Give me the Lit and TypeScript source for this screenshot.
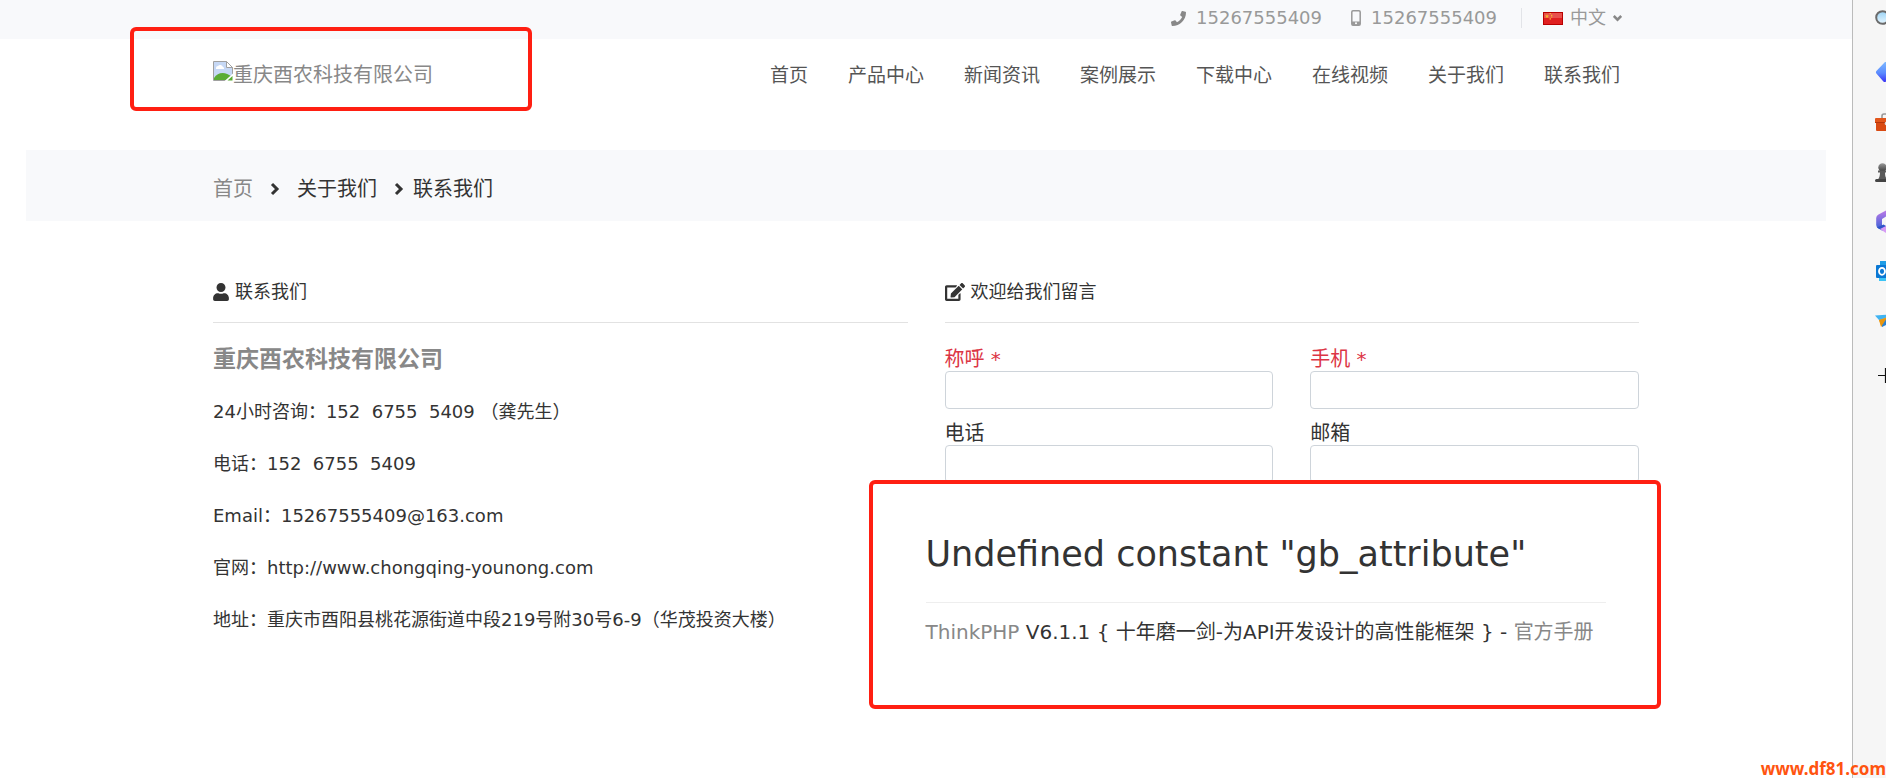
import { LitElement, html, svg, css } from "lit";
import { customElement } from "lit/decorators.js";

const NAV = ["首页", "产品中心", "新闻资讯", "案例展示", "下载中心", "在线视频", "关于我们", "联系我们"];

const CONTACT = [
  "24小时咨询：152\u00a0 6755\u00a0 5409 （龚先生）",
  "电话：152\u00a0 6755\u00a0 5409",
  "Email：15267555409@163.com",
  "官网：http://www.chongqing-younong.com",
  "地址：重庆市酉阳县桃花源街道中段219号附30号6-9（华茂投资大楼）",
];

const FIELDS = [
  { id: "name", label: "称呼", required: true },
  { id: "mobile", label: "手机", required: true },
  { id: "phone", label: "电话", required: false },
  { id: "email", label: "邮箱", required: false },
];

const RAIL = [
  {
    name: "搜索",
    art: svg`<defs><linearGradient id="lens" x2="0" y2="1"><stop stop-color="#9bd3f5"/><stop offset="1" stop-color="#e6f6ff"/></linearGradient></defs>
      <path d="M12 12l7 7" stroke="#666" stroke-width="3" stroke-linecap="round"/>
      <circle cx="7.5" cy="7.5" r="6.3" fill="url(#lens)" stroke="#6b6b6b" stroke-width="2"/>`,
  },
  {
    name: "购物",
    art: svg`<defs><linearGradient id="tag" x2="0" y2="1"><stop stop-color="#7db8ff"/><stop offset=".55" stop-color="#5b8cff"/><stop offset="1" stop-color="#3a35f5"/></linearGradient></defs>
      <path d="M1.6 10.8 10 2h10v10L11 21.4a2 2 0 0 1-2.6 0L1.6 13.8a2.2 2.2 0 0 1 0-3z" fill="url(#tag)"/>`,
  },
  {
    name: "工具",
    art: svg`<path d="M7 8V6a2 2 0 0 1 2-2h6a2 2 0 0 1 2 2v2" fill="none" stroke="#9a9a9a" stroke-width="1.6"/>
      <rect x="1" y="10" width="21" height="11" rx="1" fill="#d94a12"/>
      <rect x="0" y="8" width="23" height="5" rx="1" fill="#e2561b"/>
      <rect x="0" y="12" width="23" height="1" fill="#b5360a"/>
      <circle cx="11.500" cy="13.500" r="1.800" fill="#ddd"/>`,
  },
  {
    name: "游戏",
    art: svg`<defs><linearGradient id="pawn" x2="0" y2="1"><stop stop-color="#999"/><stop offset="1" stop-color="#3c3c3c"/></linearGradient></defs>
      <circle cx="7.500" cy="7.500" r="4.200" fill="url(#pawn)"/>
      <path d="M3 10.500h9v2H10c0 3 .6 5 2 7H3c1.400-2 2-4 2-7H3z" fill="#5b5b5b"/>
      <rect x="0" y="19" width="15" height="3" rx="1.500" fill="#444"/>`,
  },
  {
    name: "Microsoft 365",
    art: svg`<defs><linearGradient id="hexa" x2="0" y2="1"><stop stop-color="#c07ae8"/><stop offset="1" stop-color="#3d62d6"/></linearGradient></defs>
      <path d="M12 0 3.500 4.500A4 4 0 0 0 1.200 8v7a4 4 0 0 0 2.300 3.500L7 19V9l5-3z" fill="url(#hexa)"/>
      <path d="M12 16.500 8.500 14.500 1.800 17.500 7 20.500 12 20z" fill="#2f55c8"/>
      <path d="M5 19l6-3v7z" fill="#d79bf5"/>`,
  },
  {
    name: "Outlook",
    art: svg`<rect x="5" y="1" width="16" height="20" fill="#1f9de6"/>
      <rect x="4" y="17" width="17" height="4" fill="#3cc4f5"/>
      <rect x="1" y="5" width="13" height="13" rx="1" fill="#0a78d4"/>
      <ellipse cx="7" cy="11.300" rx="3" ry="3.500" fill="none" stroke="#fff" stroke-width="1.800"/>`,
  },
  {
    name: "投递",
    art: svg`<path d="M0 5.500 22 4 14 10 4 10z" fill="#3fb3f2"/>
      <path d="M4 10 18 5 7 17z" fill="#f5a11c"/>
      <path d="M7 11 22 4 11 15 7 17z" fill="#2b7fd0"/>
      <path d="M4 10 12 8 6 17z" fill="#e8960f"/>`,
  },
  {
    name: "添加",
    art: svg`<path d="M3 15.500h15M10.500 8v15" stroke="#111" stroke-width="1.200"/>`,
  },
];

@customElement("app-root")
export class AppRoot extends LitElement {
  static styles = css`
    :host {
      display: block;
      position: relative;
      overflow: hidden;
      font-family: "DejaVu Sans", "Noto Sans CJK SC", sans-serif;
      font-size: 20px;
      line-height: 24px;
      color: #333;
      background: #fff;
    }
    * {
      box-sizing: border-box;
    }
    a {
      color: #888;
      text-decoration: none;
    }
    svg {
      display: block;
      flex: none;
    }
    .frame {
      display: grid;
      grid-template-columns: minmax(0, 1fr) 34px;
      min-height: 100vh;
    }
    .wrap {
      width: 77%;
      margin: 0 auto;
    }
    .topbar {
      background: #f8f9fb;
    }
    .topbar .wrap {
      display: flex;
      justify-content: flex-end;
      align-items: center;
      height: 39px;
      padding: 0 17px 3px 0;
      font-size: 18px;
      color: #999;
    }
    .tel {
      display: flex;
      align-items: center;
      gap: 10px;
      margin-right: 29px;
      color: #999;
    }
    .tel.last {
      margin-right: 24px;
    }
    .lang {
      display: flex;
      align-items: center;
      gap: 7px;
      height: 20px;
      padding: 0 0 0 21px;
      border: 0;
      border-left: 1px solid #e2e4e8;
      background: none;
      font: inherit;
      color: #999;
    }
    .header {
      position: relative;
      display: flex;
      justify-content: space-between;
      align-items: center;
      height: 111px;
      padding: 0 19px 39px 0;
    }
    .logo {
      display: flex;
      align-items: center;
    }
    .logo svg {
      margin-bottom: 8px;
    }
    .nav {
      display: flex;
      gap: 40px;
      font-size: 19px;
    }
    .nav a {
      color: #555;
    }
    .mark {
      position: absolute;
      border: 4px solid #ff1f12;
      border-radius: 6px;
      pointer-events: none;
    }
    .mark.brand {
      left: -83px;
      top: -12px;
      width: 402px;
      height: 84px;
    }
    .crumbs {
      margin: 0 26px;
      padding: 27px 0 20px 187px;
      display: flex;
      align-items: center;
      background: #f8f9fb;
    }
    .crumbs svg {
      margin: 0 17px;
    }
    .crumbs svg.tight {
      margin-right: 9px;
    }
    .columns {
      display: grid;
      grid-template-columns: repeat(2, minmax(0, 1fr));
      gap: 37px;
      padding-top: 59px;
    }
    .title {
      display: flex;
      align-items: center;
      gap: 6px;
      margin: 0 0 24px;
      padding-bottom: 18px;
      border-bottom: 1px solid #e2e2e2;
      font-size: 18px;
      font-weight: 400;
    }
    .company {
      margin: 0 0 29px;
      font-size: 23px;
      font-weight: 700;
      color: #888;
    }
    .line {
      margin: 0 0 28px;
      font-size: 18px;
      white-space: nowrap;
    }
    .message {
      position: relative;
    }
    .form {
      display: grid;
      grid-template-columns: repeat(2, minmax(0, 1fr));
      gap: 12px 37px;
    }
    .label {
      display: block;
    }
    .label.required {
      color: #dc3545;
    }
    .input {
      display: block;
      width: 100%;
      height: 38px;
      padding: 6px 12px;
      border: 1px solid #ced4da;
      border-radius: 4px;
      background: #fff;
      font: inherit;
    }
    .error {
      position: absolute;
      left: -76px;
      right: -22px;
      top: 200px;
      padding: 50px 51px 61px 53px;
      border: 4px solid #ff1f12;
      border-radius: 6px;
      background: #fff;
      white-space: nowrap;
    }
    .error h1 {
      margin: 0 0 17px;
      padding-bottom: 28px;
      border-bottom: 1px solid #eee;
      font-size: 35px;
      line-height: 40px;
      font-weight: 400;
    }
    .error p {
      margin: 0;
    }
    .rail {
      display: flex;
      flex-direction: column;
      gap: 26px;
      padding: 10px 0 0 22px;
      overflow: hidden;
      border-left: 1px solid #bbb;
      background: #f6f6f6;
    }
    .tool {
      width: 24px;
      height: 24px;
      padding: 0;
      border: 0;
      background: none;
    }
    .site {
      position: absolute;
      right: 0;
      bottom: 0;
      font-family: "Noto Sans", sans-serif;
      font-size: 17px;
      line-height: 18px;
      font-weight: 700;
      color: #ff5410;
    }
  `;

  private chevron(cls = "") {
    return html`<svg class=${cls} width="10" height="14" viewBox="0 0 10 14" aria-hidden="true">
      <path d="M2 2l5 5-5 5" fill="none" stroke="#333" stroke-width="3" />
    </svg>`;
  }

  render() {
    return html`
      <div class="frame">
        <div>
          <div class="topbar">
            <div class="wrap">
              <a class="tel" href="tel:15267555409">
                <svg width="15" height="15" viewBox="0 0 512 512" aria-hidden="true">
                  <path fill="#888" d="M493.400 24.600l-104-24c-11.300-2.600-22.900 3.300-27.500 13.900l-48 112c-4.200 9.800-1.400 21.300 6.900 28l60.600 49.600c-36 76.700-98.900 140.500-177.200 177.200l-49.600-60.600c-6.800-8.300-18.200-11.100-28-6.900l-112 48C3.900 366.500-2 378.100.6 389.400l24 104C27.100 504.200 36.700 512 48 512c256.100 0 464-207.500 464-464 0-11.200-7.700-20.900-18.600-23.400z" />
                </svg>
                15267555409
              </a>
              <a class="tel last" href="tel:15267555409">
                <svg width="10" height="16" viewBox="0 0 10 16" aria-hidden="true">
                  <rect x=".8" y=".8" width="8.400" height="14.400" rx="1.200" fill="none" stroke="#999" stroke-width="1.500" />
                  <path d="M1 11.500h8V15H1z" fill="#999" />
                  <circle cx="5" cy="13.300" r="1" fill="#fff" />
                </svg>
                15267555409
              </a>
              <button class="lang">
                <svg width="20" height="13" viewBox="0 0 20 13" aria-hidden="true">
                  <rect x=".5" y=".5" width="19" height="12" fill="#e02020" stroke="#b80000" />
                  <path d="M1 1h18v5H1z" fill="#e8504c" />
                  <path d="M4 2l.6 1.500h1.700L5 4.600l.5 1.700L4 5.300l-1.500 1L3 4.600 1.700 3.500h1.700z" fill="#f5b52e" />
                  <path d="M6.500 1.500h1.500M8 3.300h1.300M8 5h1.300M6.500 6.800H8" stroke="#f5b52e" stroke-width="1.200" />
                </svg>
                中文
                <svg width="9" height="8" viewBox="0 0 9 8" aria-hidden="true">
                  <path d="M.8 2l3.700 3.700L8.200 2" fill="none" stroke="#888" stroke-width="2.500" />
                </svg>
              </button>
            </div>
          </div>

          <header class="wrap header">
            <a class="logo" href="#">
              <svg width="20" height="20" viewBox="0 0 20 20" aria-hidden="true">
                <path d="M.5.500h13l6 6v13H.5z" fill="#c6d8f5" stroke="#a0a0a0" />
                <path d="M3 7a2 2 0 0 1 2-2 3 3 0 0 1 5 1 1.500 1.500 0 0 1 1 2H3z" fill="#fff" />
                <path d="M1 17c4-6 11-7 18-1v3H1z" fill="#5aac35" />
                <path d="M13.500.500v6h6z" fill="#fff" stroke="#a0a0a0" />
                <path d="M11 20.500 20.500 12v8.500z" fill="#fff" />
                <path d="M14.500 19.500 19.500 15v4.500z" fill="#5aac35" />
              </svg>
              重庆酉农科技有限公司
            </a>
            <nav class="nav">${NAV.map((t) => html`<a href="#">${t}</a>`)}</nav>
            <div class="mark brand"></div>
          </header>

          <nav class="crumbs" aria-label="位置">
            <a href="#">首页</a>${this.chevron()}<span>关于我们</span>${this.chevron("tight")}<span>联系我们</span>
          </nav>

          <main class="wrap columns">
            <section>
              <h2 class="title">
                <svg width="16" height="18" viewBox="0 0 448 512" aria-hidden="true">
                  <path fill="#333" d="M224 256c70.700 0 128-57.300 128-128S294.700 0 224 0 96 57.300 96 128s57.300 128 128 128zm89.600 32h-16.700c-22.200 10.200-46.900 16-72.900 16s-50.600-5.800-72.900-16h-16.700C60.200 288 0 348.200 0 422.400V464c0 26.500 21.500 48 48 48h352c26.500 0 48-21.500 48-48v-41.600c0-74.200-60.200-134.400-134.400-134.400z" />
                </svg>
                联系我们
              </h2>
              <h3 class="company">重庆酉农科技有限公司</h3>
              ${CONTACT.map((t) => html`<p class="line">${t}</p>`)}
            </section>

            <section class="message">
              <h2 class="title">
                <svg width="20" height="18" viewBox="0 0 576 512" aria-hidden="true">
                  <path fill="#333" d="M402.600 83.200l90.200 90.200c3.800 3.800 3.800 10 0 13.800L274.400 405.600l-92.800 10.300c-12.400 1.400-22.900-9.100-21.500-21.500l10.300-92.800L388.800 83.200c3.800-3.800 10-3.800 13.800 0zm162-22.900l-48.800-48.800c-15.200-15.200-39.900-15.200-55.200 0l-35.400 35.400c-3.800 3.800-3.800 10 0 13.800l90.200 90.200c3.800 3.800 10 3.800 13.800 0l35.400-35.400c15.200-15.300 15.200-40 0-55.200zM384 346.200V448H64V128h229.800c3.200 0 6.200-1.300 8.500-3.500l40-40c7.600-7.600 2.200-20.500-8.500-20.500H48C21.500 64 0 85.500 0 112v352c0 26.500 21.500 48 48 48h352c26.500 0 48-21.500 48-48V306.200c0-10.700-12.900-16-20.500-8.500l-40 40c-2.200 2.300-3.500 5.300-3.500 8.500z" />
                </svg>
                欢迎给我们留言
              </h2>
              <form class="form">
                ${FIELDS.map(
                  (f) => html`<div>
                    <label class="label ${f.required ? "required" : ""}" for=${f.id}>${f.label}${f.required ? " *" : ""}</label>
                    <input class="input" id=${f.id} name=${f.id} type="text" ?required=${f.required} />
                  </div>`
                )}
              </form>
              <div class="error" role="alert">
                <h1>Undefined constant "gb_attribute"</h1>
                <p><a href="#">ThinkPHP</a> V6.1.1 { 十年磨一剑-为API开发设计的高性能框架 } - <a href="#">官方手册</a></p>
              </div>
            </section>
          </main>
        </div>

        <aside class="rail">
          ${RAIL.map(
            (r) => html`<button class="tool" aria-label=${r.name}>
              <svg width="24" height="24" viewBox="0 0 24 24" overflow="visible">${r.art}</svg>
            </button>`
          )}
        </aside>
      </div>
      <div class="site">www.df81.com</div>
    `;
  }
}
